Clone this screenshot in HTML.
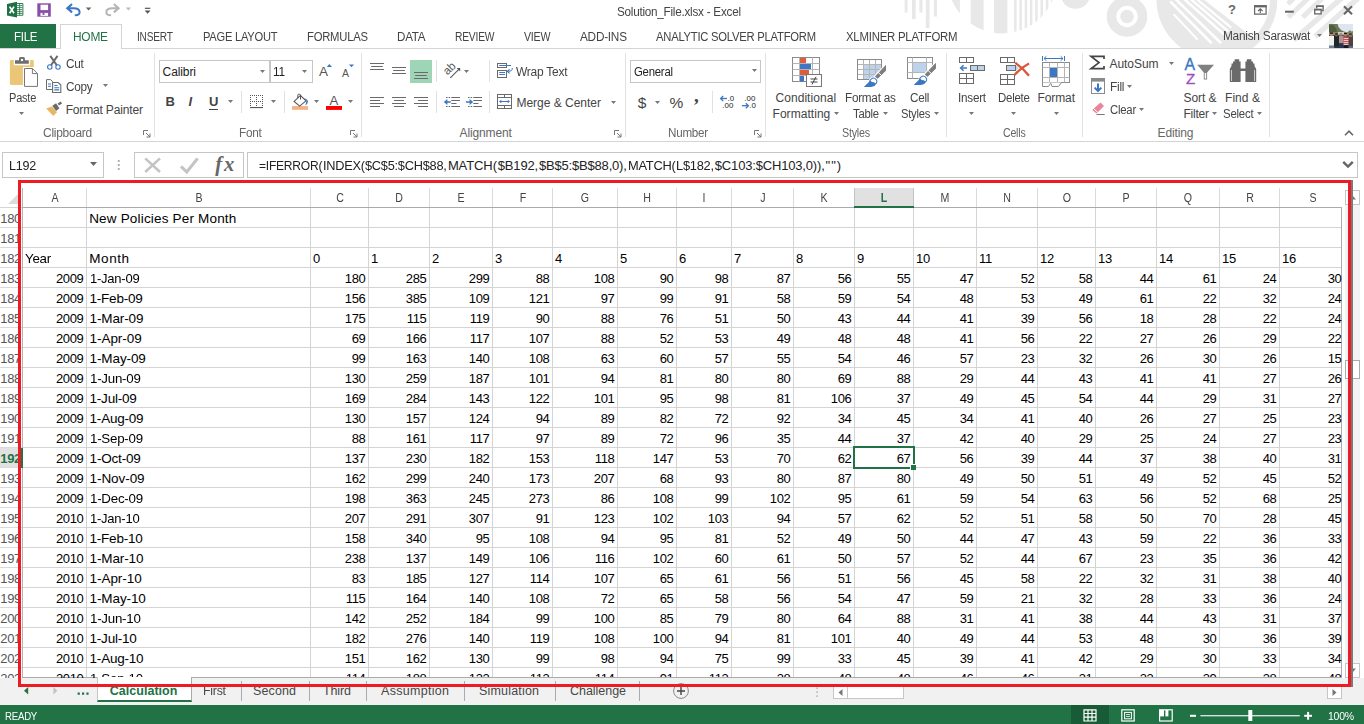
<!DOCTYPE html>
<html lang="en"><head><meta charset="utf-8"><title>Solution_File.xlsx - Excel</title>
<style>
html,body{margin:0;padding:0;}
body{width:1364px;height:724px;overflow:hidden;background:#fff;position:relative;font-family:"Liberation Sans",sans-serif;font-size:12px;color:#444;}
.a{position:absolute;}
.t{position:absolute;white-space:pre;line-height:20px;height:20px;}
svg{position:absolute;overflow:visible;}
.sep{position:absolute;width:1px;background:#e1e1e1;}
.arr{position:absolute;width:5px;height:3px;background:#777;clip-path:polygon(0 0,100% 0,50% 100%);}
.c{position:absolute;height:20px;line-height:21px;font-size:13px;letter-spacing:-0.35px;color:#000;white-space:pre;}
.c.r{text-align:right;width:60px;}
.ch{position:absolute;top:189px;width:30px;height:19px;line-height:19px;text-align:center;font-size:12.5px;color:#444;transform:scaleX(0.85);}
.ch.sel{color:#217346;font-weight:700;}
.rh{position:absolute;left:-11px;width:32px;height:20px;line-height:21px;text-align:right;font-size:13px;letter-spacing:-0.35px;color:#555;}
.rh.sel{color:#217346;font-weight:700;}

</style></head>
<body>
<!-- title bar -->
<svg style="left:880px;top:0;overflow:hidden" width="484" height="48" viewBox="880 0 484 48"><defs><clipPath id="cpA"><circle cx="1002.2" cy="-21.3" r="54.7"/></clipPath><clipPath id="cpB"><circle cx="1217" cy="-1" r="60.4"/></clipPath></defs><rect x="904.7" y="0" width="2.8" height="12.5" fill="#e8e8e8"/><rect x="912.0" y="0" width="3.7" height="19.0" fill="#e8e8e8"/><rect x="919.4" y="0" width="3.1" height="12.5" fill="#e8e8e8"/><rect x="925.8" y="0" width="3.7" height="28.0" fill="#e8e8e8"/><rect x="934.0" y="0" width="3.0" height="16.5" fill="#e8e8e8"/><g clip-path="url(#cpA)" fill="#e8e8e8"><rect x="940" y="0" width="19.9" height="48"/><rect x="970.7" y="0" width="12.9" height="48"/><rect x="994" y="0" width="13.4" height="48"/><rect x="1014.1" y="0" width="2.5" height="48"/><rect x="1019.4" y="0" width="2.5" height="48"/><rect x="1024.7" y="0" width="2.5" height="48"/><rect x="1029.9" y="0" width="2.5" height="48"/><rect x="1035.2" y="0" width="2.5" height="48"/><rect x="1040.5" y="0" width="2.5" height="48"/><rect x="1045.8" y="0" width="2.5" height="48"/><rect x="1051.1" y="0" width="2.5" height="48"/></g><circle cx="1075.5" cy="-6" r="14.8" fill="#e8e8e8"/><circle cx="1127" cy="16.5" r="15.5" fill="none" stroke="#e8e8e8" stroke-width="9.6"/><circle cx="1127" cy="16.5" r="6.8" fill="#e8e8e8"/><circle cx="1217" cy="-1" r="56.7" fill="none" stroke="#e8e8e8" stroke-width="7.4"/><g clip-path="url(#cpB)"><path d="M1150 -10L1191.3 -10L1270 50.6L1270 70L1150 70Z" fill="#e8e8e8"/><path d="M1174.2 14.7L1196.9 38.9" stroke="#fff" stroke-width="2.0" stroke-linecap="round"/><path d="M1170.9 2.2L1210.9 42.5" stroke="#fff" stroke-width="2.5" stroke-linecap="round"/><path d="M1174.4 -2.0L1220.4 42.5" stroke="#fff" stroke-width="2.5" stroke-linecap="round"/><path d="M1183.0 -2.0L1223.3 33.7" stroke="#fff" stroke-width="2.5" stroke-linecap="round"/><path d="M1189.5 -2.0L1227.7 30.8" stroke="#fff" stroke-width="2.4" stroke-linecap="round"/><path d="M1195.3 -2.0L1230.6 27.1" stroke="#fff" stroke-width="2.2" stroke-linecap="round"/></g><path d="M1298.0 -6L1288.0 4.0" stroke="#e8e8e8" stroke-width="5.0"/><path d="M1312.7 -6L1288.2 17.3" stroke="#e8e8e8" stroke-width="5.0"/><path d="M1326.7 -6L1302.7 17.3" stroke="#e8e8e8" stroke-width="5.0"/><path d="M1346.4 -6L1293.6 40.0" stroke="#e8e8e8" stroke-width="5.4"/><path d="M1362.8 -6L1315.0 36.4" stroke="#e8e8e8" stroke-width="5.4"/></svg>
<span class="t" style="left:617.00px;top:2.00px;font-size:12px;color:#444;letter-spacing:-0.250px;transform:scaleX(0.9753);transform-origin:0 0;">Solution_File.xlsx - Excel</span>
<svg style="left:0;top:0" width="160" height="24" viewBox="0 0 160 24">
<path d="M16.2 3.5H22.9V15.3H16.2Z" fill="#fff" stroke="#1e7145" stroke-width="0.9"/>
<path d="M17 5.6H22.5M17 7.6H22.5M17 9.6H22.5M17 11.6H22.5M17 13.4H22.5M19.6 3.8V15" stroke="#1e7145" stroke-width="0.8" fill="none"/>
<path d="M7 4.1L17 1.8V17.6L7 15.6Z" fill="#1e7145"/>
<path d="M9.6 6.6L14 13.2M14 6.6L9.6 13.2" stroke="#fff" stroke-width="1.7" fill="none"/>
<path d="M37.3 3.3H50.8V16.7H37.3Z" fill="#8a4ea8"/>
<rect x="40.5" y="4.7" width="7.6" height="5.4" fill="#fff"/>
<rect x="40.5" y="12.9" width="7.6" height="3" fill="#fff"/><rect x="42.5" y="12.9" width="2" height="2" fill="#8a4ea8"/>
<path d="M67.6 8.2H73.5C77.6 8.2 79.6 9.8 79.6 12.2C79.6 14.2 77.9 15.2 74.8 15.2" fill="none" stroke="#3b77c2" stroke-width="2"/>
<path d="M65.7 8.2L71.4 3.2L72.7 4.8L69.2 8.2L72.7 11.6L71.4 13.2Z" fill="#3b77c2"/>
<path d="M118.3 8.2H112.4C108.3 8.2 106.3 9.8 106.3 12.2C106.3 14.2 108 15.2 111.1 15.2" fill="none" stroke="#b5b5b5" stroke-width="2"/>
<path d="M120.2 8.2L114.5 3.2L113.2 4.8L116.7 8.2L113.2 11.6L114.5 13.2Z" fill="#b5b5b5"/>
<path d="M85.8 7.6H91.4L88.6 10.6Z" fill="#666"/>
<path d="M125.8 7.6H131L128.4 10.4Z" fill="#bcbcbc"/>
<rect x="144.9" y="7.7" width="5.4" height="1.2" fill="#555"/><path d="M144.7 10.6H150.5L147.6 13.8Z" fill="#555"/>
</svg>
<svg style="left:1220px;top:0" width="144" height="24" viewBox="1220 0 144 24">
<path d="M1254.6 5.8H1266.1V14.1H1254.6Z" fill="none" stroke="#666" stroke-width="1.2"/><rect x="1254" y="5.2" width="12.7" height="2.2" fill="#666"/>
<path d="M1260.3 13V9M1258 11L1260.3 8.8L1262.6 11" fill="none" stroke="#666" stroke-width="1.1"/>
<rect x="1285" y="10.7" width="8.8" height="2" fill="#666"/>
<path d="M1316.7 8.6V6.1H1323.1V10.6H1321.6" fill="none" stroke="#666" stroke-width="1.3"/><rect x="1316.2" y="5.4" width="7.5" height="1.6" fill="#666"/>
<rect x="1314.7" y="9.5" width="6.4" height="4.4" fill="none" stroke="#666" stroke-width="1.3"/><rect x="1314.1" y="8.8" width="7.6" height="1.6" fill="#666"/>
<path d="M1344 6.2L1352 14.2M1352 6.2L1344 14.2" stroke="#666" stroke-width="2.1" fill="none"/>
</svg>
<span class="t" style="left:1228.00px;top:0.20px;font-size:13px;color:#666;letter-spacing:0.000px;font-weight:700;">?</span>
<!-- ribbon tabs -->
<div class="a" style="left:0;top:24px;width:56px;height:25px;background:#217346"></div>
<span class="t" style="left:14.00px;top:27.00px;font-size:12px;color:#fff;letter-spacing:-0.250px;transform:scaleX(0.9555);transform-origin:0 0;">FILE</span>
<div class="a" style="left:0;top:48px;width:1364px;height:1px;background:#d4d4d4"></div>
<div class="a" style="left:60px;top:24px;width:62px;height:25px;background:#fff;border:1px solid #d4d4d4;border-bottom:none;box-sizing:border-box"></div>
<span class="t" style="left:73.00px;top:27.00px;font-size:12px;color:#217346;letter-spacing:-0.250px;transform:scaleX(0.9929);transform-origin:0 0;">HOME</span>
<span class="t" style="left:137.00px;top:27.00px;font-size:12px;color:#444;letter-spacing:-0.250px;transform:scaleX(0.8461);transform-origin:0 0;">INSERT</span>
<span class="t" style="left:203.00px;top:27.00px;font-size:12px;color:#444;letter-spacing:-0.250px;transform:scaleX(0.9264);transform-origin:0 0;">PAGE LAYOUT</span>
<span class="t" style="left:307.00px;top:27.00px;font-size:12px;color:#444;letter-spacing:-0.250px;transform:scaleX(0.9394);transform-origin:0 0;">FORMULAS</span>
<span class="t" style="left:397.00px;top:27.00px;font-size:12px;color:#444;letter-spacing:-0.250px;transform:scaleX(0.9666);transform-origin:0 0;">DATA</span>
<span class="t" style="left:455.00px;top:27.00px;font-size:12px;color:#444;letter-spacing:-0.250px;transform:scaleX(0.8569);transform-origin:0 0;">REVIEW</span>
<span class="t" style="left:524.00px;top:27.00px;font-size:12px;color:#444;letter-spacing:-0.250px;transform:scaleX(0.8856);transform-origin:0 0;">VIEW</span>
<span class="t" style="left:580.00px;top:27.00px;font-size:12px;color:#444;letter-spacing:-0.250px;transform:scaleX(0.9824);transform-origin:0 0;">ADD-INS</span>
<span class="t" style="left:656.00px;top:27.00px;font-size:12px;color:#444;letter-spacing:-0.250px;transform:scaleX(0.9359);transform-origin:0 0;">ANALYTIC SOLVER PLATFORM</span>
<span class="t" style="left:846.00px;top:27.00px;font-size:12px;color:#444;letter-spacing:-0.250px;transform:scaleX(0.9499);transform-origin:0 0;">XLMINER PLATFORM</span>
<span class="t" style="left:1222.60px;top:25.60px;font-size:12px;color:#444;letter-spacing:-0.250px;transform:scaleX(0.9870);transform-origin:0 0;">Manish Saraswat</span>
<div class="arr" style="left:1317px;top:34px;background:#777"></div>
<svg style="left:1329px;top:24px;overflow:hidden" width="24" height="24" viewBox="0 0 24 24">
<defs><filter id="avb" x="-10%" y="-10%" width="120%" height="120%"><feGaussianBlur stdDeviation="0.4"/></filter></defs>
<rect width="24" height="24" fill="#dfe7ee"/>
<g filter="url(#avb)">
<rect x="-2" y="-2" width="28" height="11" fill="#dde6ee"/>
<path d="M-2 -2H8L9.5 3L12 6L15 7.5L18 8.4L19.5 7.5L21 6L22 7.5L26 7V11H-2Z" fill="#6b7758"/>
<path d="M-2 1H4L7 4L8 8H-2Z" fill="#4f5c40"/>
<rect x="-2" y="8.5" width="28" height="4" fill="#8f8a6e"/>
<rect x="9" y="8" width="6" height="2.5" fill="#c9cfd6"/>
<rect x="-2" y="11" width="28" height="15" fill="#5d584f"/>
<rect x="0" y="12" width="5" height="10" fill="#f2f1ee"/><rect x="0" y="21.5" width="5" height="3" fill="#6f7f95"/>
<rect x="5" y="11.5" width="5" height="11" fill="#1e2c27"/><rect x="5.5" y="22" width="4.5" height="3" fill="#2a3040"/>
<rect x="10" y="12" width="4.5" height="7.5" fill="#b58f95"/><rect x="10" y="19.2" width="4.5" height="6" fill="#2b3653"/>
<rect x="14.6" y="13" width="5" height="8.2" fill="#c4404c"/><path d="M14.6 14.6H19.6M14.6 16.6H19.6M14.6 18.6H19.6M14.6 20.4H19.6" stroke="#f3e9e9" stroke-width="0.9"/><rect x="14.6" y="21.2" width="5" height="4" fill="#15171c"/>
<rect x="19.7" y="13.2" width="4.5" height="9" fill="#51403f"/><rect x="19.7" y="22" width="4.5" height="3" fill="#52698a"/>
<circle cx="2.4" cy="10.4" r="1.5" fill="#b98a6c"/><circle cx="7.4" cy="11" r="1.4" fill="#8a5f45"/><circle cx="11.9" cy="10.3" r="1.5" fill="#b58567"/><circle cx="16.4" cy="10.9" r="1.5" fill="#a87a5e"/><circle cx="21.3" cy="11.6" r="1.5" fill="#a1745a"/>
<path d="M1 9.2H4M6.2 9.9H8.8M15 9.5H18M20 10.2H22.8" stroke="#1c1814" stroke-width="1.2"/>
</g>
</svg>
<!-- ribbon -->
<div class="a" style="left:0;top:141px;width:1364px;height:1px;background:#d4d4d4"></div>
<div class="sep" style="left:154px;top:53px;height:84px;background:#e1e1e1"></div>
<div class="sep" style="left:361px;top:53px;height:84px;background:#e1e1e1"></div>
<div class="sep" style="left:625px;top:53px;height:84px;background:#e1e1e1"></div>
<div class="sep" style="left:765px;top:53px;height:84px;background:#e1e1e1"></div>
<div class="sep" style="left:946px;top:53px;height:84px;background:#e1e1e1"></div>
<div class="sep" style="left:1082px;top:53px;height:84px;background:#e1e1e1"></div>
<div class="sep" style="left:1269px;top:53px;height:84px;background:#e1e1e1"></div>
<svg style="left:0;top:48px" width="1364" height="94" viewBox="0 48 1364 94"><path d="M11 60H32.8Q33.8 60 33.8 61V66.9H22.9V84.9H11Q9.9 84.9 9.9 83.8V61Q9.9 60 11 60Z" fill="#ecc677"/><rect x="13.8" y="59.5" width="16.3" height="5.8" fill="#fff"/><path d="M15 60.3H19V58.6Q19 57.1 20.5 57.1H23.4Q24.9 57.1 24.9 58.6V60.3H28.8V63.7H15Z" fill="#6d6d6d"/><rect x="20.9" y="58.9" width="2.2" height="2.2" fill="#fff"/><path d="M24.5 68.5H32.4L37.5 73.6V86.4H24.5Z" fill="#fff" stroke="#777" stroke-width="1"/><path d="M32.4 68.5V73.6H37.5" fill="none" stroke="#777" stroke-width="1"/><path d="M50.3 55.9L56.8 65.2M57.5 55.9L51 65.2" stroke="#6a6a6a" stroke-width="2" fill="none"/><circle cx="49.8" cy="67" r="2.2" fill="none" stroke="#3b77c2" stroke-width="1.1"/><circle cx="58" cy="67" r="2.2" fill="none" stroke="#3b77c2" stroke-width="1.1"/><path d="M52.5 89.5H46.5V79.6H50.6L52.8 81.8" fill="none" stroke="#6a6a6a" stroke-width="1"/><path d="M48 84H51M48 86.3H51" stroke="#3b77c2" stroke-width="1"/><path d="M52.6 82.5H58.2L60.8 85.1V92.5H52.6Z" fill="#fff" stroke="#6a6a6a" stroke-width="1.1"/><path d="M54.3 85.5H57.5M54.3 87.7H59.2M54.3 89.9H59.2" stroke="#3b77c2" stroke-width="1.1"/><path d="M46.2 108.4L53.3 115.9L57 112.2L51.9 106.5Z" fill="#e8b765"/><path d="M52.3 105.8L56.1 103.2L59.4 108.2L56.1 110.9Z" fill="#6a6a6a"/><path d="M57.7 103.5L60.8 101.6L62 103.6L59 105.6Z" fill="#6a6a6a"/><path d="M326.8 67L329.4 64L332 67Z" fill="#3b77c2"/><path d="M349 64.4H354L351.5 67.2Z" fill="#3b77c2"/><path d="M250.0 95.0h1v1h-1zM252.0 95.0h1v1h-1zM254.0 95.0h1v1h-1zM256.0 95.0h1v1h-1zM258.0 95.0h1v1h-1zM260.0 95.0h1v1h-1zM262.0 95.0h1v1h-1zM250.0 97.0h1v1h-1zM256.0 97.0h1v1h-1zM262.0 97.0h1v1h-1zM250.0 99.0h1v1h-1zM256.0 99.0h1v1h-1zM262.0 99.0h1v1h-1zM250.0 101.0h1v1h-1zM252.0 101.0h1v1h-1zM254.0 101.0h1v1h-1zM256.0 101.0h1v1h-1zM258.0 101.0h1v1h-1zM260.0 101.0h1v1h-1zM262.0 101.0h1v1h-1zM250.0 103.0h1v1h-1zM256.0 103.0h1v1h-1zM262.0 103.0h1v1h-1zM250.0 105.0h1v1h-1zM256.0 105.0h1v1h-1zM262.0 105.0h1v1h-1z" fill="#555"/><rect x="250" y="107" width="13" height="1.1" fill="#555"/><rect x="292" y="106.1" width="16" height="3.7" fill="#f4b183"/><path d="M300.4 95.4L306 100.8L299.7 106.1L294.1 101.4Z" fill="#fff" stroke="#555" stroke-width="1.1"/><path d="M297.8 98.2V95.2Q297.8 94.3 298.7 94.3H299.6Q300.5 94.3 300.5 95.2V99.5" fill="none" stroke="#555" stroke-width="1"/><path d="M304 97.9Q308.2 99.2 308 101.8Q307.7 104.2 305.2 105.4Q306.2 102.8 306.5 100.6Z" fill="#3b77c2"/><rect x="326" y="106" width="16" height="3.9" fill="#ff0000"/><path d="M370.0 63.5H384.0M371.2 66.5H382.8M370.0 69.5H384.0" stroke="#6a6a6a" stroke-width="1" fill="none"/><path d="M392.0 67.5H406.0M393.2 70.5H404.8M392.0 73.5H406.0" stroke="#6a6a6a" stroke-width="1" fill="none"/><rect x="410" y="60" width="22" height="23" fill="#9fd5b7"/><path d="M414.0 72.5H428.0M415.2 75.5H426.8M414.0 78.5H428.0" stroke="#6a6a6a" stroke-width="1" fill="none"/><path d="M370.0 97.5H384.0M370.0 100.5H380.0M370.0 103.5H384.0M370.0 106.5H380.0" stroke="#6a6a6a" stroke-width="1" fill="none"/><path d="M392.0 97.5H406.0M394.0 100.5H404.0M392.0 103.5H406.0M394.0 106.5H404.0" stroke="#6a6a6a" stroke-width="1" fill="none"/><path d="M414.0 97.5H428.0M418.0 100.5H428.0M414.0 103.5H428.0M418.0 106.5H428.0" stroke="#6a6a6a" stroke-width="1" fill="none"/><path d="M450.3 77.9L459.6 68.6" fill="none" stroke="#555" stroke-width="1.1"/><path d="M456.6 68H460.2V71.6Z" fill="#555"/><text x="0" y="0" transform="translate(447.6,75.6) rotate(-45)" font-size="11.5" fill="#555" font-family="Liberation Sans, sans-serif" letter-spacing="-0.3">ab</text><path d="M451.3 97.5H460.0M451.3 100.5H460.0M451.3 103.5H456.5M451.3 106.5H460.0" stroke="#6a6a6a" stroke-width="1" fill="none"/><path d="M446.0 97.5h1.6m1 0h1.6M446.0 106.5h1.6m1 0h1.6" stroke="#6a6a6a" stroke-width="1" fill="none"/><path d="M445.5 102H450.8" stroke="#3b77c2" stroke-width="1.5"/><path d="M443.8 102L447.4 99V105Z" fill="#3b77c2"/><path d="M473.3 97.5H482.0M473.3 100.5H482.0M473.3 103.5H478.5M473.3 106.5H482.0" stroke="#6a6a6a" stroke-width="1" fill="none"/><path d="M468.0 97.5h1.6m1 0h1.6M468.0 106.5h1.6m1 0h1.6" stroke="#6a6a6a" stroke-width="1" fill="none"/><path d="M465.9 102H471.0" stroke="#3b77c2" stroke-width="1.5"/><path d="M473.2 102L469.6 99V105Z" fill="#3b77c2"/><rect x="497.5" y="63.5" width="9" height="4" fill="#fff" stroke="#6a6a6a" stroke-width="1"/><rect x="497.5" y="70.5" width="9" height="7" fill="#fff" stroke="#6a6a6a" stroke-width="1"/><path d="M499.2 65.5H511M499.2 72.5H505M499.2 74.5H505" stroke="#3b77c2" stroke-width="1" fill="none"/><path d="M512.3 68Q512.6 71.4 508.2 71.3" stroke="#3b77c2" stroke-width="1" fill="none"/><path d="M509.6 69.3L507.3 71.3L509.6 73.3" stroke="#3b77c2" stroke-width="1.1" fill="none"/><rect x="497.5" y="94.5" width="14" height="14" fill="#fff" stroke="#6a6a6a" stroke-width="1"/><path d="M497.5 97.5H511.5M497.5 105.5H511.5M504.5 94.5V97.5M504.5 105.5V108.5" stroke="#6a6a6a" stroke-width="1" fill="none"/><path d="M500 101.5H509" stroke="#3b77c2" stroke-width="1"/><path d="M499 101.5L501.3 99.7V103.3ZM510 101.5L507.7 99.7V103.3Z" fill="#3b77c2"/><path d="M721 98.5H727" stroke="#3b77c2" stroke-width="1.3"/><path d="M723.2 96L720.6 98.5L723.2 101" stroke="#3b77c2" stroke-width="1.3" fill="none"/><path d="M742 105.7H748" stroke="#3b77c2" stroke-width="1.3"/><path d="M745.8 103.2L748.4 105.7L745.8 108.2" stroke="#3b77c2" stroke-width="1.3" fill="none"/><g font-size="7.9" fill="#222" font-family="Liberation Sans, sans-serif"><text x="727.6" y="100.8">.0</text><text x="722.3" y="108">.00</text><text x="744.3" y="100.8">.00</text><text x="749.2" y="108">.0</text></g><rect x="792.5" y="57.5" width="27" height="24" fill="#fff" stroke="#8a8a8a" stroke-width="1"/><path d="M799.5 57.5V81.5M812.5 57.5V81.5M792.5 63.5H819.5M792.5 69.5H819.5M792.5 75.5H819.5" stroke="#b5b5b5" stroke-width="1" fill="none"/><rect x="800" y="58" width="6" height="5" fill="#e05c3c"/><rect x="800" y="64" width="11" height="5" fill="#3b77c2"/><rect x="800" y="70" width="9" height="5" fill="#e05c3c"/><rect x="800" y="76" width="4" height="5.5" fill="#3b77c2"/><rect x="806.5" y="74.5" width="15" height="12" fill="#fff" stroke="#777" stroke-width="1"/><path d="M810.5 79H817.5M810.5 82H817.5M816 76.8L812 84.4" stroke="#444" stroke-width="1" fill="none"/><rect x="863.5" y="64.5" width="18" height="15" fill="#bdd3ec"/><path d="M863.5 59.5V79.5M869.5 59.5V79.5M875.5 59.5V79.5M857.5 64.5H881.5M857.5 69.5H881.5M857.5 74.5H881.5" stroke="#b5b5b5" stroke-width="1" fill="none"/><rect x="857.5" y="59.5" width="24" height="20" fill="none" stroke="#8a8a8a" stroke-width="1"/><g transform="translate(0.0,0.0)"><path d="M886 64.9V70.5L877.7 78.7L875.1 76.4Z" fill="#7f7f7f" stroke="#fff" stroke-width="2.4" paint-order="stroke"/><path d="M886 64.9V70.5L877.7 78.7L875.1 76.4Z" fill="#7f7f7f"/><path d="M886.6 70.5L877.7 79.3L876.5 82H887Z" fill="#fff"/><path d="M878 72.2L882.4 76.4" stroke="#fff" stroke-width="1"/><circle cx="873.3" cy="81.5" r="4.6" fill="#fff"/><path d="M863.9 86.9L870.4 80.6Q871.4 82.6 874 82.2L875.6 83.6Q875.4 86.9 871 86.9Z" fill="#3b77c2"/><ellipse cx="873.3" cy="81.6" rx="3.5" ry="3.3" fill="none" stroke="#3b77c2" stroke-width="1" transform="rotate(-40 873.3 81.6)"/></g><rect x="907.5" y="57.5" width="25" height="21" fill="#fff" stroke="#8a8a8a" stroke-width="1"/><rect x="912.5" y="62.5" width="14" height="10" fill="#bdd3ec"/><path d="M912.5 57.5V78.5M926.5 57.5V78.5M907.5 62.5H932.5M907.5 72.5H932.5" stroke="#b5b5b5" stroke-width="1" fill="none"/><g transform="translate(49.8,-2.0)"><path d="M886 64.9V70.5L877.7 78.7L875.1 76.4Z" fill="#7f7f7f" stroke="#fff" stroke-width="2.4" paint-order="stroke"/><path d="M886 64.9V70.5L877.7 78.7L875.1 76.4Z" fill="#7f7f7f"/><path d="M886.6 70.5L877.7 79.3L876.5 82H887Z" fill="#fff"/><path d="M878 72.2L882.4 76.4" stroke="#fff" stroke-width="1"/><circle cx="873.3" cy="81.5" r="4.6" fill="#fff"/><path d="M863.9 86.9L870.4 80.6Q871.4 82.6 874 82.2L875.6 83.6Q875.4 86.9 871 86.9Z" fill="#3b77c2"/><ellipse cx="873.3" cy="81.6" rx="3.5" ry="3.3" fill="none" stroke="#3b77c2" stroke-width="1" transform="rotate(-40 873.3 81.6)"/></g><rect x="959.5" y="57.5" width="14.0" height="5.0" fill="#fff" stroke="#6a6a6a" stroke-width="1"/><path d="M966.5 57.5V62.5" stroke="#6a6a6a" stroke-width="1" fill="none"/><rect x="970.5" y="65.5" width="14.0" height="5.0" fill="#bdd3ec" stroke="#6a6a6a" stroke-width="1"/><path d="M977.5 65.5V70.5" stroke="#6a6a6a" stroke-width="1" fill="none"/><rect x="959.5" y="73.5" width="14.0" height="10.0" fill="#fff" stroke="#6a6a6a" stroke-width="1"/><path d="M966.5 73.5V83.5M959.5 78.5H973.5" stroke="#6a6a6a" stroke-width="1" fill="none"/><path d="M961 68H967" stroke="#3b77c2" stroke-width="1.5"/><path d="M963.6 65.2L960.6 68L963.6 70.8" stroke="#3b77c2" stroke-width="1.5" fill="none"/><rect x="1000.5" y="57.5" width="14.0" height="5.0" fill="#fff" stroke="#6a6a6a" stroke-width="1"/><path d="M1007.5 57.5V62.5" stroke="#6a6a6a" stroke-width="1" fill="none"/><rect x="1006.5" y="65.5" width="9.0" height="5.0" fill="#bdd3ec" stroke="#6a6a6a" stroke-width="1"/><rect x="1000.5" y="74.5" width="14.0" height="10.0" fill="#fff" stroke="#6a6a6a" stroke-width="1"/><path d="M1007.5 74.5V84.5M1000.5 79.5H1014.5" stroke="#6a6a6a" stroke-width="1" fill="none"/><path d="M1016 65.6L1018.8 68L1016 70.4Z" fill="#bdd3ec"/><path d="M1015.2 62.8Q1023 68 1029 75.8M1029 63.5Q1020 68.5 1014.6 75" stroke="#d9583a" stroke-width="2.3" fill="none"/><path d="M1042.5 56V61M1064.5 56V61M1044 58.5H1063" stroke="#3b77c2" stroke-width="1" fill="none"/><path d="M1046.4 56.2L1044 58.5L1046.4 60.8M1060.6 56.2L1063 58.5L1060.6 60.8" stroke="#3b77c2" stroke-width="1" fill="none"/><rect x="1042.5" y="62.5" width="27" height="20" fill="#fff" stroke="#8a8a8a" stroke-width="1"/><path d="M1049.5 62.5V82.5M1057.5 62.5V82.5M1064.5 62.5V82.5M1042.5 67.5H1069.5M1042.5 77.5H1069.5" stroke="#b5b5b5" stroke-width="1" fill="none"/><rect x="1050" y="68" width="7" height="9" fill="#3b77c2"/><path d="M1042.5 82.5V86.5H1048.5L1050.5 83.5H1051L1052 86.5H1058.5L1061.5 82.5" fill="#fff" stroke="#8a8a8a" stroke-width="1"/><path d="M1104 59V56.3H1091L1099 62.6L1091 68.7H1104V66" fill="none" stroke="#444" stroke-width="1.7" stroke-linejoin="miter"/><rect x="1091.5" y="78.5" width="13" height="15" fill="#fff" stroke="#8a8a8a" stroke-width="1"/><rect x="1091" y="78" width="14" height="3.6" fill="#8a8a8a"/><path d="M1098 83.6V91" stroke="#3b77c2" stroke-width="2"/><path d="M1094.6 87.6L1098 91L1101.4 87.6" stroke="#3b77c2" stroke-width="2" fill="none"/><path d="M1092.2 110L1100.5 102.5L1104 106.1L1096.6 113.6Z" fill="#e8859b"/><path d="M1093.6 108.7L1097.8 112.4" stroke="#fff" stroke-width="1"/><path d="M1096.5 114.5H1104.7" stroke="#777" stroke-width="1"/><path d="M1197.2 64.8H1214L1207.1 72.6V79.4H1203.8V72.6Z" fill="#808080"/><rect x="1204.7" y="73" width="1.5" height="5.6" fill="#fff"/><path d="M1229.8 82.1V69L1231.5 66V63.5H1233V61.5H1234.6V59.3H1239.2V61.5H1240.6V68.6H1245.4V61.5H1246.8V59.3H1251.4V61.5H1253V63.5H1254.5V66L1256.2 69V82.1H1245.4V71H1240.6V82.1Z" fill="#6a6a6a"/><path d="M1231.5 70V81M1254.5 70V81" stroke="#fff" stroke-width="0.8" opacity="0.8"/></svg>
<span class="t" style="left:8.80px;top:88.00px;font-size:12px;color:#444;letter-spacing:-0.250px;transform:scaleX(0.9196);transform-origin:0 0;">Paste</span>
<div class="arr" style="left:19px;top:112px;background:#777"></div>
<span class="t" style="left:65.70px;top:54.00px;font-size:12px;color:#444;letter-spacing:-0.250px;transform:scaleX(0.9842);transform-origin:0 0;">Cut</span>
<span class="t" style="left:65.70px;top:77.00px;font-size:12px;color:#444;letter-spacing:-0.250px;transform:scaleX(0.9793);transform-origin:0 0;">Copy</span>
<div class="arr" style="left:103px;top:84px;background:#777"></div>
<span class="t" style="left:65.70px;top:100.00px;font-size:12px;color:#444;letter-spacing:-0.166px;">Format Painter</span>
<span class="t" style="left:43.00px;top:123.00px;font-size:12px;color:#666;letter-spacing:-0.250px;transform:scaleX(0.9965);transform-origin:0 0;">Clipboard</span>
<svg style="left:143px;top:130px" width="8" height="8" viewBox="0 0 8 8"><path d="M0.5 5V0.5H5" fill="none" stroke="#777" stroke-width="1"/><path d="M3 3L7 7M7 3.5V7H3.5" fill="none" stroke="#777" stroke-width="1"/></svg>
<div class="a" style="left:159px;top:60px;width:111px;height:23px;border:1px solid #c6c6c6;background:#fff;box-sizing:border-box"></div>
<div class="a" style="left:270px;top:60px;width:43px;height:23px;border:1px solid #c6c6c6;background:#fff;box-sizing:border-box"></div>
<span class="t" style="left:162.60px;top:62.00px;font-size:12px;color:#222;letter-spacing:-0.103px;">Calibri</span>
<div class="arr" style="left:260px;top:70px;background:#777"></div>
<div class="arr" style="left:302px;top:70px;background:#777"></div>
<span class="t" style="left:273.40px;top:62.00px;font-size:12px;color:#222;letter-spacing:-0.250px;transform:scaleX(0.9903);transform-origin:0 0;">11</span>
<span class="t" style="left:319.10px;top:62.20px;font-size:13.5px;color:#555;letter-spacing:0.000px;">A</span>
<span class="t" style="left:342.00px;top:62.70px;font-size:10.5px;color:#555;letter-spacing:0.000px;">A</span>
<span class="t" style="left:329.60px;top:91.20px;font-size:13.2px;color:#555;letter-spacing:0.000px;">A</span>
<span class="t" style="left:165.60px;top:91.50px;font-size:13px;color:#444;letter-spacing:0.000px;font-weight:700;">B</span>
<span class="t" style="left:188.50px;top:91.50px;font-size:13px;color:#444;letter-spacing:0.000px;font-weight:700;font-style:italic;">I</span>
<span class="t" style="left:209.00px;top:91.50px;font-size:13px;color:#444;letter-spacing:0.000px;font-weight:700;border-bottom:1px solid #444;height:17.6px;">U</span>
<div class="arr" style="left:228px;top:100px;background:#777"></div>
<div class="sep" style="left:241px;top:91px;height:22px;background:#e1e1e1"></div>
<div class="arr" style="left:271px;top:100px;background:#777"></div>
<div class="sep" style="left:284px;top:91px;height:22px;background:#e1e1e1"></div>
<div class="arr" style="left:314px;top:100px;background:#777"></div>
<div class="arr" style="left:348px;top:100px;background:#777"></div>
<span class="t" style="left:238.70px;top:123.00px;font-size:12px;color:#666;letter-spacing:-0.250px;transform:scaleX(0.9843);transform-origin:0 0;">Font</span>
<svg style="left:350px;top:130px" width="8" height="8" viewBox="0 0 8 8"><path d="M0.5 5V0.5H5" fill="none" stroke="#777" stroke-width="1"/><path d="M3 3L7 7M7 3.5V7H3.5" fill="none" stroke="#777" stroke-width="1"/></svg>
<div class="sep" style="left:436px;top:60px;height:22px;background:#e1e1e1"></div>
<div class="sep" style="left:436px;top:91px;height:22px;background:#e1e1e1"></div>
<div class="sep" style="left:489px;top:60px;height:22px;background:#e1e1e1"></div>
<div class="sep" style="left:489px;top:91px;height:22px;background:#e1e1e1"></div>
<div class="arr" style="left:464px;top:70px;background:#777"></div>
<span class="t" style="left:516.40px;top:62.00px;font-size:12px;color:#444;letter-spacing:-0.250px;transform:scaleX(0.9985);transform-origin:0 0;">Wrap Text</span>
<span class="t" style="left:516.40px;top:93.00px;font-size:12px;color:#444;letter-spacing:-0.008px;">Merge &amp; Center</span>
<div class="arr" style="left:611px;top:101px;background:#777"></div>
<span class="t" style="left:459.60px;top:123.00px;font-size:12px;color:#666;letter-spacing:-0.134px;">Alignment</span>
<svg style="left:614px;top:130px" width="8" height="8" viewBox="0 0 8 8"><path d="M0.5 5V0.5H5" fill="none" stroke="#777" stroke-width="1"/><path d="M3 3L7 7M7 3.5V7H3.5" fill="none" stroke="#777" stroke-width="1"/></svg>
<div class="a" style="left:630px;top:60px;width:131px;height:23px;border:1px solid #c6c6c6;background:#fff;box-sizing:border-box"></div>
<span class="t" style="left:633.50px;top:62.00px;font-size:12px;color:#222;letter-spacing:-0.250px;transform:scaleX(0.9465);transform-origin:0 0;">General</span>
<div class="arr" style="left:752px;top:69px;background:#777"></div>
<span class="t" style="left:637.80px;top:92.90px;font-size:15.5px;color:#444;letter-spacing:0.000px;">$</span>
<div class="arr" style="left:655px;top:101px;background:#777"></div>
<span class="t" style="left:669.50px;top:92.90px;font-size:15.5px;color:#444;letter-spacing:0.000px;">%</span>
<span class="t" style="left:693.90px;top:85.50px;font-size:19px;color:#444;letter-spacing:0.000px;font-weight:700;font-family:'Liberation Serif', serif;">,</span>
<div class="sep" style="left:712px;top:91px;height:22px;background:#e1e1e1"></div>
<span class="t" style="left:667.50px;top:123.00px;font-size:12px;color:#666;letter-spacing:-0.250px;transform:scaleX(0.9701);transform-origin:0 0;">Number</span>
<svg style="left:754px;top:130px" width="8" height="8" viewBox="0 0 8 8"><path d="M0.5 5V0.5H5" fill="none" stroke="#777" stroke-width="1"/><path d="M3 3L7 7M7 3.5V7H3.5" fill="none" stroke="#777" stroke-width="1"/></svg>
<span class="t" style="left:775.40px;top:88.00px;font-size:12px;color:#444;letter-spacing:0.075px;">Conditional</span>
<span class="t" style="left:772.50px;top:104.00px;font-size:12px;color:#444;letter-spacing:0.049px;">Formatting</span>
<div class="arr" style="left:834px;top:112px;background:#777"></div>
<span class="t" style="left:844.90px;top:88.00px;font-size:12px;color:#444;letter-spacing:-0.250px;transform:scaleX(0.9766);transform-origin:0 0;">Format as</span>
<span class="t" style="left:853.40px;top:104.00px;font-size:12px;color:#444;letter-spacing:-0.250px;transform:scaleX(0.9427);transform-origin:0 0;">Table</span>
<div class="arr" style="left:883px;top:112px;background:#777"></div>
<span class="t" style="left:910.20px;top:88.00px;font-size:12px;color:#444;letter-spacing:-0.250px;transform:scaleX(0.9738);transform-origin:0 0;">Cell</span>
<span class="t" style="left:901.30px;top:104.00px;font-size:12px;color:#444;letter-spacing:-0.250px;transform:scaleX(0.9320);transform-origin:0 0;">Styles</span>
<div class="arr" style="left:934px;top:112px;background:#777"></div>
<span class="t" style="left:841.50px;top:123.00px;font-size:12px;color:#666;letter-spacing:-0.250px;transform:scaleX(0.8938);transform-origin:0 0;">Styles</span>
<span class="t" style="left:957.70px;top:88.00px;font-size:12px;color:#444;letter-spacing:-0.250px;transform:scaleX(0.9769);transform-origin:0 0;">Insert</span>
<div class="arr" style="left:969px;top:112px;background:#777"></div>
<span class="t" style="left:997.70px;top:88.00px;font-size:12px;color:#444;letter-spacing:-0.250px;transform:scaleX(0.9540);transform-origin:0 0;">Delete</span>
<div class="arr" style="left:1011px;top:112px;background:#777"></div>
<span class="t" style="left:1037.50px;top:88.00px;font-size:12px;color:#444;letter-spacing:-0.103px;">Format</span>
<div class="arr" style="left:1054px;top:112px;background:#777"></div>
<span class="t" style="left:1002.90px;top:123.00px;font-size:12px;color:#666;letter-spacing:-0.250px;transform:scaleX(0.8842);transform-origin:0 0;">Cells</span>
<span class="t" style="left:1109.60px;top:54.00px;font-size:12px;color:#444;letter-spacing:-0.077px;">AutoSum</span>
<div class="arr" style="left:1169px;top:62px;background:#777"></div>
<span class="t" style="left:1109.60px;top:77.00px;font-size:12px;color:#444;letter-spacing:-0.250px;transform:scaleX(0.9946);transform-origin:0 0;">Fill</span>
<div class="arr" style="left:1127px;top:85px;background:#777"></div>
<span class="t" style="left:1109.60px;top:100.00px;font-size:12px;color:#444;letter-spacing:-0.250px;transform:scaleX(0.9463);transform-origin:0 0;">Clear</span>
<div class="arr" style="left:1139px;top:108px;background:#777"></div>
<span class="t" style="left:1184.60px;top:54.90px;font-size:15.8px;color:#3b77c2;letter-spacing:0.000px;-webkit-text-stroke:0.35px #3b77c2;">A</span>
<span class="t" style="left:1186.00px;top:68.90px;font-size:15.2px;color:#a24fbf;letter-spacing:0.000px;-webkit-text-stroke:0.35px #a24fbf;">Z</span>
<span class="t" style="left:1183.50px;top:88.00px;font-size:12px;color:#444;letter-spacing:-0.092px;">Sort &amp;</span>
<span class="t" style="left:1183.50px;top:104.00px;font-size:12px;color:#444;letter-spacing:-0.234px;">Filter</span>
<div class="arr" style="left:1212px;top:112px;background:#777"></div>
<span class="t" style="left:1225.00px;top:88.00px;font-size:12px;color:#444;letter-spacing:0.062px;">Find &amp;</span>
<span class="t" style="left:1223.20px;top:104.00px;font-size:12px;color:#444;letter-spacing:-0.250px;transform:scaleX(0.9530);transform-origin:0 0;">Select</span>
<div class="arr" style="left:1257px;top:112px;background:#777"></div>
<span class="t" style="left:1157.50px;top:123.00px;font-size:12px;color:#666;letter-spacing:-0.117px;">Editing</span>
<svg style="left:1344px;top:130px" width="10" height="6" viewBox="0 0 10 6"><path d="M1 5.2L5 1.2L9 5.2" fill="none" stroke="#666" stroke-width="1.6"/></svg>
<!-- formula bar -->
<div class="a" style="left:2px;top:152px;width:102px;height:26px;border:1px solid #c6c6c6;background:#fff;box-sizing:border-box"></div>
<span class="t" style="left:9.20px;top:155.70px;font-size:13px;color:#222;letter-spacing:-0.250px;transform:scaleX(0.9655);transform-origin:0 0;">L192</span>
<div class="arr" style="left:90px;top:162px;width:7px;height:4px;background:#666"></div>
<div class="a" style="left:134px;top:152px;width:110px;height:26px;border:1px solid #c6c6c6;background:#fff;box-sizing:border-box"></div>
<svg style="left:110px;top:152px" width="100" height="26" viewBox="110 152 100 26"><path d="M117.8 160h1.9v1.9h-1.9zM117.8 164h1.9v1.9h-1.9zM117.8 168h1.9v1.9h-1.9z" fill="#b0b0b0"/><path d="M145.2 158.4L160 172M160 158.4L145.2 172" stroke="#c4c4c4" stroke-width="2.6" fill="none"/><path d="M181 166.4L186.8 172L197.6 158.4" stroke="#c4c4c4" stroke-width="3.1" fill="none"/></svg>
<span class="t" style="left:215.20px;top:153.50px;font-size:20.5px;color:#666;letter-spacing:1.922px;font-weight:700;font-style:italic;font-family:'Liberation Serif', serif;">fx</span>
<div class="a" style="left:247px;top:152px;width:1111px;height:26px;border:1px solid #c6c6c6;background:#fff;box-sizing:border-box"></div>
<span class="t" style="left:258.60px;top:155.70px;font-size:13px;color:#222;letter-spacing:-0.250px;transform:scaleX(0.9266);transform-origin:0 0;">=IFERROR(</span>
<span class="t" style="left:322.70px;top:155.70px;font-size:13px;color:#222;letter-spacing:-0.250px;transform:scaleX(0.9810);transform-origin:0 0;">INDEX(</span>
<span class="t" style="left:365.40px;top:155.70px;font-size:13px;color:#222;letter-spacing:-0.250px;transform:scaleX(0.9826);transform-origin:0 0;">$C$5:$CH$88,</span>
<span class="t" style="left:447.90px;top:155.70px;font-size:13px;color:#222;letter-spacing:-0.099px;">MATCH(</span>
<span class="t" style="left:497.70px;top:155.70px;font-size:13px;color:#222;letter-spacing:-0.141px;">$B192,</span>
<span class="t" style="left:538.90px;top:155.70px;font-size:13px;color:#222;letter-spacing:-0.181px;">$B$5:$B$88,0),</span>
<span class="t" style="left:627.60px;top:155.70px;font-size:13px;color:#222;letter-spacing:-0.250px;transform:scaleX(0.9888);transform-origin:0 0;">MATCH(</span>
<span class="t" style="left:676.10px;top:155.70px;font-size:13px;color:#222;letter-spacing:-0.250px;transform:scaleX(0.9866);transform-origin:0 0;">L$182,</span>
<span class="t" style="left:714.80px;top:155.70px;font-size:13px;color:#222;letter-spacing:-0.171px;">$C103:$CH103,0)),</span>
<span class="t" style="left:825.50px;top:155.70px;font-size:13px;color:#222;letter-spacing:1.069px;">&quot;&quot;)</span>
<svg style="left:1342px;top:160px" width="12" height="9" viewBox="0 0 12 9"><path d="M1.2 1.8L6 6.6L10.8 1.8" fill="none" stroke="#666" stroke-width="2.4"/></svg>
<!-- grid -->
<div id="grid" class="a" style="left:0;top:0;width:1342px;height:678px;overflow:hidden">
<svg style="left:0;top:186px" width="1342" height="492" viewBox="0 186 1342 492" shape-rendering="crispEdges"><rect x="22" y="227" width="1320" height="1" fill="#d4d4d4"/><rect x="0" y="227" width="22" height="1" fill="#dadada"/><rect x="22" y="247" width="1320" height="1" fill="#d4d4d4"/><rect x="0" y="247" width="22" height="1" fill="#dadada"/><rect x="22" y="267" width="1320" height="1" fill="#d4d4d4"/><rect x="0" y="267" width="22" height="1" fill="#dadada"/><rect x="22" y="287" width="1320" height="1" fill="#d4d4d4"/><rect x="0" y="287" width="22" height="1" fill="#dadada"/><rect x="22" y="307" width="1320" height="1" fill="#d4d4d4"/><rect x="0" y="307" width="22" height="1" fill="#dadada"/><rect x="22" y="327" width="1320" height="1" fill="#d4d4d4"/><rect x="0" y="327" width="22" height="1" fill="#dadada"/><rect x="22" y="347" width="1320" height="1" fill="#d4d4d4"/><rect x="0" y="347" width="22" height="1" fill="#dadada"/><rect x="22" y="367" width="1320" height="1" fill="#d4d4d4"/><rect x="0" y="367" width="22" height="1" fill="#dadada"/><rect x="22" y="387" width="1320" height="1" fill="#d4d4d4"/><rect x="0" y="387" width="22" height="1" fill="#dadada"/><rect x="22" y="407" width="1320" height="1" fill="#d4d4d4"/><rect x="0" y="407" width="22" height="1" fill="#dadada"/><rect x="22" y="427" width="1320" height="1" fill="#d4d4d4"/><rect x="0" y="427" width="22" height="1" fill="#dadada"/><rect x="22" y="447" width="1320" height="1" fill="#d4d4d4"/><rect x="0" y="447" width="22" height="1" fill="#dadada"/><rect x="22" y="467" width="1320" height="1" fill="#d4d4d4"/><rect x="0" y="467" width="22" height="1" fill="#dadada"/><rect x="22" y="487" width="1320" height="1" fill="#d4d4d4"/><rect x="0" y="487" width="22" height="1" fill="#dadada"/><rect x="22" y="507" width="1320" height="1" fill="#d4d4d4"/><rect x="0" y="507" width="22" height="1" fill="#dadada"/><rect x="22" y="527" width="1320" height="1" fill="#d4d4d4"/><rect x="0" y="527" width="22" height="1" fill="#dadada"/><rect x="22" y="547" width="1320" height="1" fill="#d4d4d4"/><rect x="0" y="547" width="22" height="1" fill="#dadada"/><rect x="22" y="567" width="1320" height="1" fill="#d4d4d4"/><rect x="0" y="567" width="22" height="1" fill="#dadada"/><rect x="22" y="587" width="1320" height="1" fill="#d4d4d4"/><rect x="0" y="587" width="22" height="1" fill="#dadada"/><rect x="22" y="607" width="1320" height="1" fill="#d4d4d4"/><rect x="0" y="607" width="22" height="1" fill="#dadada"/><rect x="22" y="627" width="1320" height="1" fill="#d4d4d4"/><rect x="0" y="627" width="22" height="1" fill="#dadada"/><rect x="22" y="647" width="1320" height="1" fill="#d4d4d4"/><rect x="0" y="647" width="22" height="1" fill="#dadada"/><rect x="22" y="667" width="1320" height="1" fill="#d4d4d4"/><rect x="0" y="667" width="22" height="1" fill="#dadada"/><rect x="86" y="208" width="1" height="470" fill="#d4d4d4"/><rect x="86" y="188" width="1" height="19" fill="#dadada"/><rect x="310" y="208" width="1" height="470" fill="#d4d4d4"/><rect x="310" y="188" width="1" height="19" fill="#dadada"/><rect x="368" y="208" width="1" height="470" fill="#d4d4d4"/><rect x="368" y="188" width="1" height="19" fill="#dadada"/><rect x="429" y="208" width="1" height="470" fill="#d4d4d4"/><rect x="429" y="188" width="1" height="19" fill="#dadada"/><rect x="492" y="208" width="1" height="470" fill="#d4d4d4"/><rect x="492" y="188" width="1" height="19" fill="#dadada"/><rect x="552" y="208" width="1" height="470" fill="#d4d4d4"/><rect x="552" y="188" width="1" height="19" fill="#dadada"/><rect x="617" y="208" width="1" height="470" fill="#d4d4d4"/><rect x="617" y="188" width="1" height="19" fill="#dadada"/><rect x="676" y="208" width="1" height="470" fill="#d4d4d4"/><rect x="676" y="188" width="1" height="19" fill="#dadada"/><rect x="731" y="208" width="1" height="470" fill="#d4d4d4"/><rect x="731" y="188" width="1" height="19" fill="#dadada"/><rect x="793" y="208" width="1" height="470" fill="#d4d4d4"/><rect x="793" y="188" width="1" height="19" fill="#dadada"/><rect x="854" y="208" width="1" height="470" fill="#d4d4d4"/><rect x="854" y="188" width="1" height="19" fill="#dadada"/><rect x="913" y="208" width="1" height="470" fill="#d4d4d4"/><rect x="913" y="188" width="1" height="19" fill="#dadada"/><rect x="976" y="208" width="1" height="470" fill="#d4d4d4"/><rect x="976" y="188" width="1" height="19" fill="#dadada"/><rect x="1037" y="208" width="1" height="470" fill="#d4d4d4"/><rect x="1037" y="188" width="1" height="19" fill="#dadada"/><rect x="1095" y="208" width="1" height="470" fill="#d4d4d4"/><rect x="1095" y="188" width="1" height="19" fill="#dadada"/><rect x="1156" y="208" width="1" height="470" fill="#d4d4d4"/><rect x="1156" y="188" width="1" height="19" fill="#dadada"/><rect x="1219" y="208" width="1" height="470" fill="#d4d4d4"/><rect x="1219" y="188" width="1" height="19" fill="#dadada"/><rect x="1279" y="208" width="1" height="470" fill="#d4d4d4"/><rect x="1279" y="188" width="1" height="19" fill="#dadada"/><rect x="22" y="207" width="1320" height="1" fill="#ababab"/><rect x="22" y="188" width="1" height="490" fill="#b4b4b4"/><rect x="0" y="207" width="22" height="1" fill="#d4d4d4"/><rect x="1341" y="207" width="1" height="471" fill="#ababab"/><rect x="22" y="677" width="1320" height="1" fill="#ababab"/><rect x="854" y="188" width="60" height="19" fill="#e1e1e1"/><rect x="854" y="188" width="1" height="18" fill="#c4c4c4"/><rect x="913" y="188" width="1" height="18" fill="#c4c4c4"/><rect x="854" y="206" width="60" height="2" fill="#217346"/><rect x="0" y="448" width="21" height="19" fill="#e1e1e1"/><rect x="21" y="448" width="2" height="20" fill="#217346"/><path d="M19 193V204H8Z" fill="#dcdcdc" shape-rendering="auto"/><rect x="854" y="447" width="60" height="21" fill="none" stroke="#217346" stroke-width="2"/><rect x="910" y="464" width="6" height="6" fill="#fff"/><rect x="911" y="465" width="5" height="5" fill="#217346"/></svg>
<div class="ch" style="left:39.8px">A</div>
<div class="ch" style="left:183.8px">B</div>
<div class="ch" style="left:324.8px">C</div>
<div class="ch" style="left:384.3px">D</div>
<div class="ch" style="left:446.3px">E</div>
<div class="ch" style="left:507.8px">F</div>
<div class="ch" style="left:570.3px">G</div>
<div class="ch" style="left:632.3px">H</div>
<div class="ch" style="left:689.3px">I</div>
<div class="ch" style="left:747.8px">J</div>
<div class="ch" style="left:809.3px">K</div>
<div class="ch sel" style="left:869.3px">L</div>
<div class="ch" style="left:930.3px">M</div>
<div class="ch" style="left:992.3px">N</div>
<div class="ch" style="left:1051.8px">O</div>
<div class="ch" style="left:1111.3px">P</div>
<div class="ch" style="left:1173.3px">Q</div>
<div class="ch" style="left:1234.8px">R</div>
<div class="ch" style="left:1297.8px">S</div>
<div class="rh" style="top:208px">180</div>
<div class="rh" style="top:228px">181</div>
<div class="rh" style="top:248px">182</div>
<div class="rh" style="top:268px">183</div>
<div class="rh" style="top:288px">184</div>
<div class="rh" style="top:308px">185</div>
<div class="rh" style="top:328px">186</div>
<div class="rh" style="top:348px">187</div>
<div class="rh" style="top:368px">188</div>
<div class="rh" style="top:388px">189</div>
<div class="rh" style="top:408px">190</div>
<div class="rh" style="top:428px">191</div>
<div class="rh sel" style="top:448px">192</div>
<div class="rh" style="top:468px">193</div>
<div class="rh" style="top:488px">194</div>
<div class="rh" style="top:508px">195</div>
<div class="rh" style="top:528px">196</div>
<div class="rh" style="top:548px">197</div>
<div class="rh" style="top:568px">198</div>
<div class="rh" style="top:588px">199</div>
<div class="rh" style="top:608px">200</div>
<div class="rh" style="top:628px">201</div>
<div class="rh" style="top:648px">202</div>
<div class="rh" style="top:668px">203</div>
<span class="t" style="left:89.20px;top:208.50px;font-size:13.5px;color:#000;letter-spacing:0.180px;">New Policies Per Month</span>
<span class="t" style="left:25.40px;top:248.50px;font-size:13.5px;color:#000;letter-spacing:-0.250px;transform:scaleX(0.9875);transform-origin:0 0;">Year</span>
<span class="t" style="left:89.20px;top:248.50px;font-size:13.5px;color:#000;letter-spacing:0.592px;">Month</span>
<div class="c" style="left:313px;top:248px">0</div>
<div class="c" style="left:371px;top:248px">1</div>
<div class="c" style="left:432px;top:248px">2</div>
<div class="c" style="left:495px;top:248px">3</div>
<div class="c" style="left:555px;top:248px">4</div>
<div class="c" style="left:620px;top:248px">5</div>
<div class="c" style="left:679px;top:248px">6</div>
<div class="c" style="left:734px;top:248px">7</div>
<div class="c" style="left:796px;top:248px">8</div>
<div class="c" style="left:857px;top:248px">9</div>
<div class="c" style="left:916px;top:248px">10</div>
<div class="c" style="left:979px;top:248px">11</div>
<div class="c" style="left:1040px;top:248px">12</div>
<div class="c" style="left:1098px;top:248px">13</div>
<div class="c" style="left:1159px;top:248px">14</div>
<div class="c" style="left:1222px;top:248px">15</div>
<div class="c" style="left:1282px;top:248px">16</div>
<div class="c r" style="left:23.5px;top:268px">2009</div>
<span class="t" style="left:89.60px;top:268.50px;font-size:13.5px;color:#000;letter-spacing:-0.250px;transform:scaleX(0.9642);transform-origin:0 0;">1-Jan-09</span>
<div class="c r" style="left:305.5px;top:268px">180</div>
<div class="c r" style="left:366.5px;top:268px">285</div>
<div class="c r" style="left:429.5px;top:268px">299</div>
<div class="c r" style="left:489.5px;top:268px">88</div>
<div class="c r" style="left:554.5px;top:268px">108</div>
<div class="c r" style="left:613.5px;top:268px">90</div>
<div class="c r" style="left:668.5px;top:268px">98</div>
<div class="c r" style="left:730.5px;top:268px">87</div>
<div class="c r" style="left:791.5px;top:268px">56</div>
<div class="c r" style="left:850.5px;top:268px">55</div>
<div class="c r" style="left:913.5px;top:268px">47</div>
<div class="c r" style="left:974.5px;top:268px">52</div>
<div class="c r" style="left:1032.5px;top:268px">58</div>
<div class="c r" style="left:1093.5px;top:268px">44</div>
<div class="c r" style="left:1156.5px;top:268px">61</div>
<div class="c r" style="left:1216.5px;top:268px">24</div>
<div class="c r" style="left:1281.5px;top:268px">30</div>
<div class="c r" style="left:23.5px;top:288px">2009</div>
<span class="t" style="left:89.60px;top:288.50px;font-size:13.5px;color:#000;letter-spacing:-0.240px;">1-Feb-09</span>
<div class="c r" style="left:305.5px;top:288px">156</div>
<div class="c r" style="left:366.5px;top:288px">385</div>
<div class="c r" style="left:429.5px;top:288px">109</div>
<div class="c r" style="left:489.5px;top:288px">121</div>
<div class="c r" style="left:554.5px;top:288px">97</div>
<div class="c r" style="left:613.5px;top:288px">99</div>
<div class="c r" style="left:668.5px;top:288px">91</div>
<div class="c r" style="left:730.5px;top:288px">58</div>
<div class="c r" style="left:791.5px;top:288px">59</div>
<div class="c r" style="left:850.5px;top:288px">54</div>
<div class="c r" style="left:913.5px;top:288px">48</div>
<div class="c r" style="left:974.5px;top:288px">53</div>
<div class="c r" style="left:1032.5px;top:288px">49</div>
<div class="c r" style="left:1093.5px;top:288px">61</div>
<div class="c r" style="left:1156.5px;top:288px">22</div>
<div class="c r" style="left:1216.5px;top:288px">32</div>
<div class="c r" style="left:1281.5px;top:288px">24</div>
<div class="c r" style="left:23.5px;top:308px">2009</div>
<span class="t" style="left:89.60px;top:308.50px;font-size:13.5px;color:#000;letter-spacing:-0.124px;">1-Mar-09</span>
<div class="c r" style="left:305.5px;top:308px">175</div>
<div class="c r" style="left:366.5px;top:308px">115</div>
<div class="c r" style="left:429.5px;top:308px">119</div>
<div class="c r" style="left:489.5px;top:308px">90</div>
<div class="c r" style="left:554.5px;top:308px">88</div>
<div class="c r" style="left:613.5px;top:308px">76</div>
<div class="c r" style="left:668.5px;top:308px">51</div>
<div class="c r" style="left:730.5px;top:308px">50</div>
<div class="c r" style="left:791.5px;top:308px">43</div>
<div class="c r" style="left:850.5px;top:308px">44</div>
<div class="c r" style="left:913.5px;top:308px">41</div>
<div class="c r" style="left:974.5px;top:308px">39</div>
<div class="c r" style="left:1032.5px;top:308px">56</div>
<div class="c r" style="left:1093.5px;top:308px">18</div>
<div class="c r" style="left:1156.5px;top:308px">28</div>
<div class="c r" style="left:1216.5px;top:308px">22</div>
<div class="c r" style="left:1281.5px;top:308px">24</div>
<div class="c r" style="left:23.5px;top:328px">2009</div>
<span class="t" style="left:89.60px;top:328.50px;font-size:13.5px;color:#000;letter-spacing:-0.062px;">1-Apr-09</span>
<div class="c r" style="left:305.5px;top:328px">69</div>
<div class="c r" style="left:366.5px;top:328px">166</div>
<div class="c r" style="left:429.5px;top:328px">117</div>
<div class="c r" style="left:489.5px;top:328px">107</div>
<div class="c r" style="left:554.5px;top:328px">88</div>
<div class="c r" style="left:613.5px;top:328px">52</div>
<div class="c r" style="left:668.5px;top:328px">53</div>
<div class="c r" style="left:730.5px;top:328px">49</div>
<div class="c r" style="left:791.5px;top:328px">48</div>
<div class="c r" style="left:850.5px;top:328px">48</div>
<div class="c r" style="left:913.5px;top:328px">41</div>
<div class="c r" style="left:974.5px;top:328px">56</div>
<div class="c r" style="left:1032.5px;top:328px">22</div>
<div class="c r" style="left:1093.5px;top:328px">27</div>
<div class="c r" style="left:1156.5px;top:328px">26</div>
<div class="c r" style="left:1216.5px;top:328px">29</div>
<div class="c r" style="left:1281.5px;top:328px">22</div>
<div class="c r" style="left:23.5px;top:348px">2009</div>
<span class="t" style="left:89.60px;top:348.50px;font-size:13.5px;color:#000;letter-spacing:-0.119px;">1-May-09</span>
<div class="c r" style="left:305.5px;top:348px">99</div>
<div class="c r" style="left:366.5px;top:348px">163</div>
<div class="c r" style="left:429.5px;top:348px">140</div>
<div class="c r" style="left:489.5px;top:348px">108</div>
<div class="c r" style="left:554.5px;top:348px">63</div>
<div class="c r" style="left:613.5px;top:348px">60</div>
<div class="c r" style="left:668.5px;top:348px">57</div>
<div class="c r" style="left:730.5px;top:348px">55</div>
<div class="c r" style="left:791.5px;top:348px">54</div>
<div class="c r" style="left:850.5px;top:348px">46</div>
<div class="c r" style="left:913.5px;top:348px">57</div>
<div class="c r" style="left:974.5px;top:348px">23</div>
<div class="c r" style="left:1032.5px;top:348px">32</div>
<div class="c r" style="left:1093.5px;top:348px">26</div>
<div class="c r" style="left:1156.5px;top:348px">30</div>
<div class="c r" style="left:1216.5px;top:348px">26</div>
<div class="c r" style="left:1281.5px;top:348px">15</div>
<div class="c r" style="left:23.5px;top:368px">2009</div>
<span class="t" style="left:89.60px;top:368.50px;font-size:13.5px;color:#000;letter-spacing:-0.250px;transform:scaleX(0.9875);transform-origin:0 0;">1-Jun-09</span>
<div class="c r" style="left:305.5px;top:368px">130</div>
<div class="c r" style="left:366.5px;top:368px">259</div>
<div class="c r" style="left:429.5px;top:368px">187</div>
<div class="c r" style="left:489.5px;top:368px">101</div>
<div class="c r" style="left:554.5px;top:368px">94</div>
<div class="c r" style="left:613.5px;top:368px">81</div>
<div class="c r" style="left:668.5px;top:368px">80</div>
<div class="c r" style="left:730.5px;top:368px">80</div>
<div class="c r" style="left:791.5px;top:368px">69</div>
<div class="c r" style="left:850.5px;top:368px">88</div>
<div class="c r" style="left:913.5px;top:368px">29</div>
<div class="c r" style="left:974.5px;top:368px">44</div>
<div class="c r" style="left:1032.5px;top:368px">43</div>
<div class="c r" style="left:1093.5px;top:368px">41</div>
<div class="c r" style="left:1156.5px;top:368px">41</div>
<div class="c r" style="left:1216.5px;top:368px">27</div>
<div class="c r" style="left:1281.5px;top:368px">26</div>
<div class="c r" style="left:23.5px;top:388px">2009</div>
<span class="t" style="left:89.60px;top:388.50px;font-size:13.5px;color:#000;letter-spacing:-0.240px;">1-Jul-09</span>
<div class="c r" style="left:305.5px;top:388px">169</div>
<div class="c r" style="left:366.5px;top:388px">284</div>
<div class="c r" style="left:429.5px;top:388px">143</div>
<div class="c r" style="left:489.5px;top:388px">122</div>
<div class="c r" style="left:554.5px;top:388px">101</div>
<div class="c r" style="left:613.5px;top:388px">95</div>
<div class="c r" style="left:668.5px;top:388px">98</div>
<div class="c r" style="left:730.5px;top:388px">81</div>
<div class="c r" style="left:791.5px;top:388px">106</div>
<div class="c r" style="left:850.5px;top:388px">37</div>
<div class="c r" style="left:913.5px;top:388px">49</div>
<div class="c r" style="left:974.5px;top:388px">45</div>
<div class="c r" style="left:1032.5px;top:388px">54</div>
<div class="c r" style="left:1093.5px;top:388px">44</div>
<div class="c r" style="left:1156.5px;top:388px">29</div>
<div class="c r" style="left:1216.5px;top:388px">31</div>
<div class="c r" style="left:1281.5px;top:388px">27</div>
<div class="c r" style="left:23.5px;top:408px">2009</div>
<span class="t" style="left:89.60px;top:408.50px;font-size:13.5px;color:#000;letter-spacing:-0.235px;">1-Aug-09</span>
<div class="c r" style="left:305.5px;top:408px">130</div>
<div class="c r" style="left:366.5px;top:408px">157</div>
<div class="c r" style="left:429.5px;top:408px">124</div>
<div class="c r" style="left:489.5px;top:408px">94</div>
<div class="c r" style="left:554.5px;top:408px">89</div>
<div class="c r" style="left:613.5px;top:408px">82</div>
<div class="c r" style="left:668.5px;top:408px">72</div>
<div class="c r" style="left:730.5px;top:408px">92</div>
<div class="c r" style="left:791.5px;top:408px">34</div>
<div class="c r" style="left:850.5px;top:408px">45</div>
<div class="c r" style="left:913.5px;top:408px">34</div>
<div class="c r" style="left:974.5px;top:408px">41</div>
<div class="c r" style="left:1032.5px;top:408px">40</div>
<div class="c r" style="left:1093.5px;top:408px">26</div>
<div class="c r" style="left:1156.5px;top:408px">27</div>
<div class="c r" style="left:1216.5px;top:408px">25</div>
<div class="c r" style="left:1281.5px;top:408px">23</div>
<div class="c r" style="left:23.5px;top:428px">2009</div>
<span class="t" style="left:89.60px;top:428.50px;font-size:13.5px;color:#000;letter-spacing:-0.250px;transform:scaleX(0.9870);transform-origin:0 0;">1-Sep-09</span>
<div class="c r" style="left:305.5px;top:428px">88</div>
<div class="c r" style="left:366.5px;top:428px">161</div>
<div class="c r" style="left:429.5px;top:428px">117</div>
<div class="c r" style="left:489.5px;top:428px">97</div>
<div class="c r" style="left:554.5px;top:428px">89</div>
<div class="c r" style="left:613.5px;top:428px">72</div>
<div class="c r" style="left:668.5px;top:428px">96</div>
<div class="c r" style="left:730.5px;top:428px">35</div>
<div class="c r" style="left:791.5px;top:428px">44</div>
<div class="c r" style="left:850.5px;top:428px">37</div>
<div class="c r" style="left:913.5px;top:428px">42</div>
<div class="c r" style="left:974.5px;top:428px">40</div>
<div class="c r" style="left:1032.5px;top:428px">29</div>
<div class="c r" style="left:1093.5px;top:428px">25</div>
<div class="c r" style="left:1156.5px;top:428px">24</div>
<div class="c r" style="left:1216.5px;top:428px">27</div>
<div class="c r" style="left:1281.5px;top:428px">23</div>
<div class="c r" style="left:23.5px;top:448px">2009</div>
<span class="t" style="left:89.60px;top:448.50px;font-size:13.5px;color:#000;letter-spacing:-0.190px;">1-Oct-09</span>
<div class="c r" style="left:305.5px;top:448px">137</div>
<div class="c r" style="left:366.5px;top:448px">230</div>
<div class="c r" style="left:429.5px;top:448px">182</div>
<div class="c r" style="left:489.5px;top:448px">153</div>
<div class="c r" style="left:554.5px;top:448px">118</div>
<div class="c r" style="left:613.5px;top:448px">147</div>
<div class="c r" style="left:668.5px;top:448px">53</div>
<div class="c r" style="left:730.5px;top:448px">70</div>
<div class="c r" style="left:791.5px;top:448px">62</div>
<div class="c r" style="left:850.5px;top:448px">67</div>
<div class="c r" style="left:913.5px;top:448px">56</div>
<div class="c r" style="left:974.5px;top:448px">39</div>
<div class="c r" style="left:1032.5px;top:448px">44</div>
<div class="c r" style="left:1093.5px;top:448px">37</div>
<div class="c r" style="left:1156.5px;top:448px">38</div>
<div class="c r" style="left:1216.5px;top:448px">40</div>
<div class="c r" style="left:1281.5px;top:448px">31</div>
<div class="c r" style="left:23.5px;top:468px">2009</div>
<span class="t" style="left:89.60px;top:468.50px;font-size:13.5px;color:#000;letter-spacing:-0.076px;">1-Nov-09</span>
<div class="c r" style="left:305.5px;top:468px">162</div>
<div class="c r" style="left:366.5px;top:468px">299</div>
<div class="c r" style="left:429.5px;top:468px">240</div>
<div class="c r" style="left:489.5px;top:468px">173</div>
<div class="c r" style="left:554.5px;top:468px">207</div>
<div class="c r" style="left:613.5px;top:468px">68</div>
<div class="c r" style="left:668.5px;top:468px">93</div>
<div class="c r" style="left:730.5px;top:468px">80</div>
<div class="c r" style="left:791.5px;top:468px">87</div>
<div class="c r" style="left:850.5px;top:468px">80</div>
<div class="c r" style="left:913.5px;top:468px">49</div>
<div class="c r" style="left:974.5px;top:468px">50</div>
<div class="c r" style="left:1032.5px;top:468px">51</div>
<div class="c r" style="left:1093.5px;top:468px">49</div>
<div class="c r" style="left:1156.5px;top:468px">52</div>
<div class="c r" style="left:1216.5px;top:468px">45</div>
<div class="c r" style="left:1281.5px;top:468px">52</div>
<div class="c r" style="left:23.5px;top:488px">2009</div>
<span class="t" style="left:89.60px;top:488.50px;font-size:13.5px;color:#000;letter-spacing:-0.250px;transform:scaleX(0.9873);transform-origin:0 0;">1-Dec-09</span>
<div class="c r" style="left:305.5px;top:488px">198</div>
<div class="c r" style="left:366.5px;top:488px">363</div>
<div class="c r" style="left:429.5px;top:488px">245</div>
<div class="c r" style="left:489.5px;top:488px">273</div>
<div class="c r" style="left:554.5px;top:488px">86</div>
<div class="c r" style="left:613.5px;top:488px">108</div>
<div class="c r" style="left:668.5px;top:488px">99</div>
<div class="c r" style="left:730.5px;top:488px">102</div>
<div class="c r" style="left:791.5px;top:488px">95</div>
<div class="c r" style="left:850.5px;top:488px">61</div>
<div class="c r" style="left:913.5px;top:488px">59</div>
<div class="c r" style="left:974.5px;top:488px">54</div>
<div class="c r" style="left:1032.5px;top:488px">63</div>
<div class="c r" style="left:1093.5px;top:488px">56</div>
<div class="c r" style="left:1156.5px;top:488px">52</div>
<div class="c r" style="left:1216.5px;top:488px">68</div>
<div class="c r" style="left:1281.5px;top:488px">25</div>
<div class="c r" style="left:23.5px;top:508px">2010</div>
<span class="t" style="left:89.60px;top:508.50px;font-size:13.5px;color:#000;letter-spacing:-0.250px;transform:scaleX(0.9642);transform-origin:0 0;">1-Jan-10</span>
<div class="c r" style="left:305.5px;top:508px">207</div>
<div class="c r" style="left:366.5px;top:508px">291</div>
<div class="c r" style="left:429.5px;top:508px">307</div>
<div class="c r" style="left:489.5px;top:508px">91</div>
<div class="c r" style="left:554.5px;top:508px">123</div>
<div class="c r" style="left:613.5px;top:508px">102</div>
<div class="c r" style="left:668.5px;top:508px">103</div>
<div class="c r" style="left:730.5px;top:508px">94</div>
<div class="c r" style="left:791.5px;top:508px">57</div>
<div class="c r" style="left:850.5px;top:508px">62</div>
<div class="c r" style="left:913.5px;top:508px">52</div>
<div class="c r" style="left:974.5px;top:508px">51</div>
<div class="c r" style="left:1032.5px;top:508px">58</div>
<div class="c r" style="left:1093.5px;top:508px">50</div>
<div class="c r" style="left:1156.5px;top:508px">70</div>
<div class="c r" style="left:1216.5px;top:508px">28</div>
<div class="c r" style="left:1281.5px;top:508px">45</div>
<div class="c r" style="left:23.5px;top:528px">2010</div>
<span class="t" style="left:89.60px;top:528.50px;font-size:13.5px;color:#000;letter-spacing:-0.240px;">1-Feb-10</span>
<div class="c r" style="left:305.5px;top:528px">158</div>
<div class="c r" style="left:366.5px;top:528px">340</div>
<div class="c r" style="left:429.5px;top:528px">95</div>
<div class="c r" style="left:489.5px;top:528px">108</div>
<div class="c r" style="left:554.5px;top:528px">94</div>
<div class="c r" style="left:613.5px;top:528px">95</div>
<div class="c r" style="left:668.5px;top:528px">81</div>
<div class="c r" style="left:730.5px;top:528px">52</div>
<div class="c r" style="left:791.5px;top:528px">49</div>
<div class="c r" style="left:850.5px;top:528px">50</div>
<div class="c r" style="left:913.5px;top:528px">44</div>
<div class="c r" style="left:974.5px;top:528px">47</div>
<div class="c r" style="left:1032.5px;top:528px">43</div>
<div class="c r" style="left:1093.5px;top:528px">59</div>
<div class="c r" style="left:1156.5px;top:528px">22</div>
<div class="c r" style="left:1216.5px;top:528px">36</div>
<div class="c r" style="left:1281.5px;top:528px">33</div>
<div class="c r" style="left:23.5px;top:548px">2010</div>
<span class="t" style="left:89.60px;top:548.50px;font-size:13.5px;color:#000;letter-spacing:-0.124px;">1-Mar-10</span>
<div class="c r" style="left:305.5px;top:548px">238</div>
<div class="c r" style="left:366.5px;top:548px">137</div>
<div class="c r" style="left:429.5px;top:548px">149</div>
<div class="c r" style="left:489.5px;top:548px">106</div>
<div class="c r" style="left:554.5px;top:548px">116</div>
<div class="c r" style="left:613.5px;top:548px">102</div>
<div class="c r" style="left:668.5px;top:548px">60</div>
<div class="c r" style="left:730.5px;top:548px">61</div>
<div class="c r" style="left:791.5px;top:548px">50</div>
<div class="c r" style="left:850.5px;top:548px">57</div>
<div class="c r" style="left:913.5px;top:548px">52</div>
<div class="c r" style="left:974.5px;top:548px">44</div>
<div class="c r" style="left:1032.5px;top:548px">67</div>
<div class="c r" style="left:1093.5px;top:548px">23</div>
<div class="c r" style="left:1156.5px;top:548px">35</div>
<div class="c r" style="left:1216.5px;top:548px">36</div>
<div class="c r" style="left:1281.5px;top:548px">42</div>
<div class="c r" style="left:23.5px;top:568px">2010</div>
<span class="t" style="left:89.60px;top:568.50px;font-size:13.5px;color:#000;letter-spacing:-0.062px;">1-Apr-10</span>
<div class="c r" style="left:305.5px;top:568px">83</div>
<div class="c r" style="left:366.5px;top:568px">185</div>
<div class="c r" style="left:429.5px;top:568px">127</div>
<div class="c r" style="left:489.5px;top:568px">114</div>
<div class="c r" style="left:554.5px;top:568px">107</div>
<div class="c r" style="left:613.5px;top:568px">65</div>
<div class="c r" style="left:668.5px;top:568px">61</div>
<div class="c r" style="left:730.5px;top:568px">56</div>
<div class="c r" style="left:791.5px;top:568px">51</div>
<div class="c r" style="left:850.5px;top:568px">56</div>
<div class="c r" style="left:913.5px;top:568px">45</div>
<div class="c r" style="left:974.5px;top:568px">58</div>
<div class="c r" style="left:1032.5px;top:568px">22</div>
<div class="c r" style="left:1093.5px;top:568px">32</div>
<div class="c r" style="left:1156.5px;top:568px">31</div>
<div class="c r" style="left:1216.5px;top:568px">38</div>
<div class="c r" style="left:1281.5px;top:568px">40</div>
<div class="c r" style="left:23.5px;top:588px">2010</div>
<span class="t" style="left:89.60px;top:588.50px;font-size:13.5px;color:#000;letter-spacing:-0.119px;">1-May-10</span>
<div class="c r" style="left:305.5px;top:588px">115</div>
<div class="c r" style="left:366.5px;top:588px">164</div>
<div class="c r" style="left:429.5px;top:588px">140</div>
<div class="c r" style="left:489.5px;top:588px">108</div>
<div class="c r" style="left:554.5px;top:588px">72</div>
<div class="c r" style="left:613.5px;top:588px">65</div>
<div class="c r" style="left:668.5px;top:588px">58</div>
<div class="c r" style="left:730.5px;top:588px">56</div>
<div class="c r" style="left:791.5px;top:588px">54</div>
<div class="c r" style="left:850.5px;top:588px">47</div>
<div class="c r" style="left:913.5px;top:588px">59</div>
<div class="c r" style="left:974.5px;top:588px">21</div>
<div class="c r" style="left:1032.5px;top:588px">32</div>
<div class="c r" style="left:1093.5px;top:588px">28</div>
<div class="c r" style="left:1156.5px;top:588px">33</div>
<div class="c r" style="left:1216.5px;top:588px">36</div>
<div class="c r" style="left:1281.5px;top:588px">24</div>
<div class="c r" style="left:23.5px;top:608px">2010</div>
<span class="t" style="left:89.60px;top:608.50px;font-size:13.5px;color:#000;letter-spacing:-0.250px;transform:scaleX(0.9875);transform-origin:0 0;">1-Jun-10</span>
<div class="c r" style="left:305.5px;top:608px">142</div>
<div class="c r" style="left:366.5px;top:608px">252</div>
<div class="c r" style="left:429.5px;top:608px">184</div>
<div class="c r" style="left:489.5px;top:608px">99</div>
<div class="c r" style="left:554.5px;top:608px">100</div>
<div class="c r" style="left:613.5px;top:608px">85</div>
<div class="c r" style="left:668.5px;top:608px">79</div>
<div class="c r" style="left:730.5px;top:608px">80</div>
<div class="c r" style="left:791.5px;top:608px">64</div>
<div class="c r" style="left:850.5px;top:608px">88</div>
<div class="c r" style="left:913.5px;top:608px">31</div>
<div class="c r" style="left:974.5px;top:608px">41</div>
<div class="c r" style="left:1032.5px;top:608px">38</div>
<div class="c r" style="left:1093.5px;top:608px">44</div>
<div class="c r" style="left:1156.5px;top:608px">43</div>
<div class="c r" style="left:1216.5px;top:608px">31</div>
<div class="c r" style="left:1281.5px;top:608px">37</div>
<div class="c r" style="left:23.5px;top:628px">2010</div>
<span class="t" style="left:89.60px;top:628.50px;font-size:13.5px;color:#000;letter-spacing:-0.240px;">1-Jul-10</span>
<div class="c r" style="left:305.5px;top:628px">182</div>
<div class="c r" style="left:366.5px;top:628px">276</div>
<div class="c r" style="left:429.5px;top:628px">140</div>
<div class="c r" style="left:489.5px;top:628px">119</div>
<div class="c r" style="left:554.5px;top:628px">108</div>
<div class="c r" style="left:613.5px;top:628px">100</div>
<div class="c r" style="left:668.5px;top:628px">94</div>
<div class="c r" style="left:730.5px;top:628px">81</div>
<div class="c r" style="left:791.5px;top:628px">101</div>
<div class="c r" style="left:850.5px;top:628px">40</div>
<div class="c r" style="left:913.5px;top:628px">49</div>
<div class="c r" style="left:974.5px;top:628px">44</div>
<div class="c r" style="left:1032.5px;top:628px">53</div>
<div class="c r" style="left:1093.5px;top:628px">48</div>
<div class="c r" style="left:1156.5px;top:628px">30</div>
<div class="c r" style="left:1216.5px;top:628px">36</div>
<div class="c r" style="left:1281.5px;top:628px">39</div>
<div class="c r" style="left:23.5px;top:648px">2010</div>
<span class="t" style="left:89.60px;top:648.50px;font-size:13.5px;color:#000;letter-spacing:-0.235px;">1-Aug-10</span>
<div class="c r" style="left:305.5px;top:648px">151</div>
<div class="c r" style="left:366.5px;top:648px">162</div>
<div class="c r" style="left:429.5px;top:648px">130</div>
<div class="c r" style="left:489.5px;top:648px">99</div>
<div class="c r" style="left:554.5px;top:648px">98</div>
<div class="c r" style="left:613.5px;top:648px">94</div>
<div class="c r" style="left:668.5px;top:648px">75</div>
<div class="c r" style="left:730.5px;top:648px">99</div>
<div class="c r" style="left:791.5px;top:648px">33</div>
<div class="c r" style="left:850.5px;top:648px">45</div>
<div class="c r" style="left:913.5px;top:648px">39</div>
<div class="c r" style="left:974.5px;top:648px">41</div>
<div class="c r" style="left:1032.5px;top:648px">42</div>
<div class="c r" style="left:1093.5px;top:648px">29</div>
<div class="c r" style="left:1156.5px;top:648px">30</div>
<div class="c r" style="left:1216.5px;top:648px">33</div>
<div class="c r" style="left:1281.5px;top:648px">34</div>
<div class="c r" style="left:23.5px;top:668px">2010</div>
<span class="t" style="left:89.60px;top:668.50px;font-size:13.5px;color:#000;letter-spacing:-0.250px;transform:scaleX(0.9870);transform-origin:0 0;">1-Sep-10</span>
<div class="c r" style="left:305.5px;top:668px">114</div>
<div class="c r" style="left:366.5px;top:668px">188</div>
<div class="c r" style="left:429.5px;top:668px">132</div>
<div class="c r" style="left:489.5px;top:668px">113</div>
<div class="c r" style="left:554.5px;top:668px">114</div>
<div class="c r" style="left:613.5px;top:668px">91</div>
<div class="c r" style="left:668.5px;top:668px">113</div>
<div class="c r" style="left:730.5px;top:668px">38</div>
<div class="c r" style="left:791.5px;top:668px">48</div>
<div class="c r" style="left:850.5px;top:668px">48</div>
<div class="c r" style="left:913.5px;top:668px">46</div>
<div class="c r" style="left:974.5px;top:668px">46</div>
<div class="c r" style="left:1032.5px;top:668px">31</div>
<div class="c r" style="left:1093.5px;top:668px">33</div>
<div class="c r" style="left:1156.5px;top:668px">39</div>
<div class="c r" style="left:1216.5px;top:668px">38</div>
<div class="c r" style="left:1281.5px;top:668px">48</div>
</div>
<!-- sheet tabs -->
<div class="a" style="left:0;top:678px;width:1364px;height:27px;background:#f1f1f1"></div>
<div class="a" style="left:191px;top:677px;width:1151px;height:1px;background:#ababab"></div>
<div class="a" style="left:97px;top:677px;width:95px;height:25px;background:#fff;border-left:1px solid #c6c6c6;border-right:1px solid #ababab;border-bottom:2px solid #217346;box-sizing:border-box"></div>
<span class="t" style="left:109.70px;top:681.00px;font-size:12.5px;color:#217346;letter-spacing:0.033px;font-weight:700;">Calculation</span>
<span class="t" style="left:203.00px;top:681.00px;font-size:12.5px;color:#484848;letter-spacing:-0.250px;transform:scaleX(0.9866);transform-origin:0 0;">First</span>
<span class="t" style="left:253.00px;top:681.00px;font-size:12.5px;color:#484848;letter-spacing:0.119px;">Second</span>
<span class="t" style="left:323.00px;top:681.00px;font-size:12.5px;color:#484848;letter-spacing:-0.121px;">Third</span>
<span class="t" style="left:381.00px;top:681.00px;font-size:12.5px;color:#484848;letter-spacing:0.299px;">Assumption</span>
<span class="t" style="left:479.00px;top:681.00px;font-size:12.5px;color:#484848;letter-spacing:0.181px;">Simulation</span>
<span class="t" style="left:570.00px;top:681.00px;font-size:12.5px;color:#484848;letter-spacing:-0.037px;">Challenge</span>
<div class="sep" style="left:241px;top:681px;height:20px;background:#ababab"></div>
<div class="sep" style="left:309px;top:681px;height:20px;background:#ababab"></div>
<div class="sep" style="left:366px;top:681px;height:20px;background:#ababab"></div>
<div class="sep" style="left:464px;top:681px;height:20px;background:#ababab"></div>
<div class="sep" style="left:555px;top:681px;height:20px;background:#ababab"></div>
<div class="sep" style="left:639px;top:681px;height:20px;background:#ababab"></div>
<svg style="left:0;top:678px" width="1364" height="27" viewBox="0 678 1364 27"><path d="M28.2 687V694.4L24 690.7Z" fill="#217346"/><path d="M53.4 687V694.4L57.4 690.7Z" fill="#c3c3c3"/><path d="M77.6 692.6h2.2v2.2h-2.2zM82 692.6h2.2v2.2h-2.2zM86.4 692.6h2.2v2.2h-2.2z" fill="#217346"/><circle cx="681" cy="691" r="7.4" fill="none" stroke="#8a8a8a" stroke-width="1"/><path d="M677 691H685M681 687V695" stroke="#444" stroke-width="1.4"/><path d="M816.3 687.3h1.6v1.6h-1.6zM816.3 691.3h1.6v1.6h-1.6zM816.3 695.3h1.6v1.6h-1.6z" fill="#bdbdbd"/></svg>
<!-- horizontal scrollbar -->
<div class="a" style="left:833px;top:686px;width:509px;height:13px;background:#f1f1f1"></div>
<div class="a" style="left:833px;top:686px;width:15px;height:13px;border:1px solid #c6c6c6;background:#fff;box-sizing:border-box"></div>
<div class="a" style="left:847px;top:686px;width:57px;height:13px;border:1px solid #c6c6c6;background:#fff;box-sizing:border-box"></div>
<div class="a" style="left:1327px;top:686px;width:15px;height:13px;border:1px solid #c6c6c6;background:#fff;box-sizing:border-box"></div>
<svg style="left:833px;top:686px" width="509" height="13" viewBox="833 686 509 13"><path d="M842.5 689V696L838.5 692.5Z" fill="#777"/><path d="M1332.5 689V696L1336.5 692.5Z" fill="#777"/></svg>
<!-- vertical scrollbar -->
<div class="a" style="left:1345px;top:190px;width:15px;height:488px;background:#f3f3f3"></div>
<div class="a" style="left:1345px;top:190px;width:15px;height:15px;border:1px solid #c6c6c6;background:#fff;box-sizing:border-box"></div>
<div class="a" style="left:1345px;top:360px;width:15px;height:19px;border:1px solid #ababab;background:#fff;box-sizing:border-box"></div>
<div class="a" style="left:1345px;top:663px;width:15px;height:15px;border:1px solid #c6c6c6;background:#fff;box-sizing:border-box"></div>
<svg style="left:1345px;top:190px" width="15" height="488" viewBox="1345 190 15 488"><path d="M1349 199.5H1356L1352.5 195.5Z" fill="#777"/><path d="M1349 668.5H1356L1352.5 672.5Z" fill="#777"/></svg>
<!-- status bar -->
<div class="a" style="left:0;top:705px;width:1364px;height:19px;background:#217346"></div>
<div class="a" style="left:1071px;top:705px;width:38px;height:19px;background:#185c37"></div>
<span class="t" style="left:4.80px;top:706.00px;font-size:11px;color:#fff;letter-spacing:-0.250px;transform:scaleX(0.8752);transform-origin:0 0;">READY</span>
<span class="t" style="left:1327.80px;top:706.00px;font-size:11px;color:#fff;letter-spacing:-0.250px;transform:scaleX(0.9529);transform-origin:0 0;">100%</span>
<svg style="left:1064px;top:705px" width="300" height="19" viewBox="1064 705 300 19"><path d="M1084 709.8H1096V721H1084ZM1088 709.8V721M1092 709.8V721M1084 713.5H1096M1084 717.2H1096" fill="none" stroke="#fff" stroke-width="1.2"/><rect x="1121.8" y="709.8" width="12.4" height="11.2" fill="none" stroke="#fff" stroke-width="1.2"/><rect x="1124.6" y="712.4" width="6.8" height="6.4" fill="none" stroke="#fff" stroke-width="1"/><path d="M1126 714.6H1130M1126 716.6H1130" stroke="#fff" stroke-width="0.8"/><rect x="1159.6" y="709.8" width="12.6" height="11.2" fill="none" stroke="#fff" stroke-width="1.2"/><rect x="1160" y="710" width="4" height="6.4" fill="#fff"/><rect x="1165.4" y="710" width="3" height="6.4" fill="#fff"/><rect x="1190" y="714.8" width="6" height="2" fill="#fff"/><rect x="1200.4" y="715.2" width="99.4" height="1.1" fill="#fff"/><rect x="1248.3" y="710" width="4" height="11" fill="#fff"/><rect x="1304.2" y="714.8" width="7.8" height="2" fill="#fff"/><rect x="1307.1" y="711.9" width="2" height="7.8" fill="#fff"/></svg>
<!-- red annotation -->
<div class="a" style="left:1351px;top:180px;width:2px;height:507px;background:#7a7a7a"></div>
<div class="a" style="left:18px;top:180px;width:1333px;height:507px;border:3px solid #ed1c24;box-sizing:border-box"></div>
</body></html>
